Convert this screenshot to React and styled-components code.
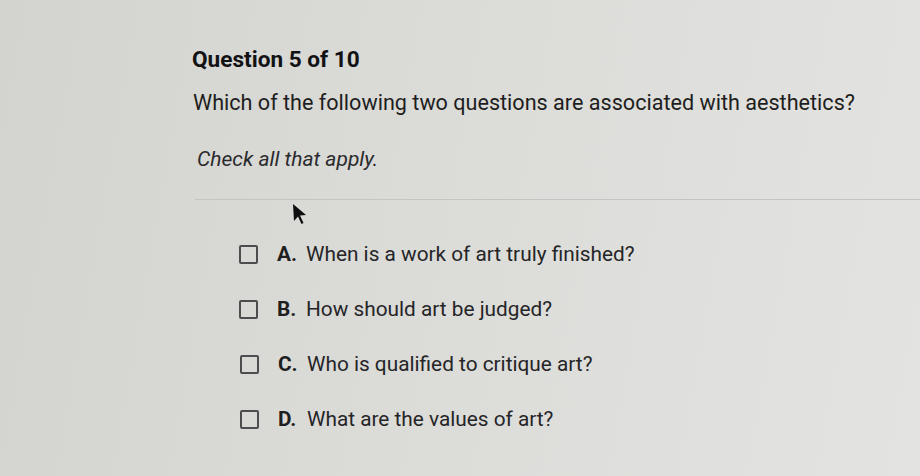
import React from "react";
import styled, { createGlobalStyle } from "styled-components";

const GlobalStyle = createGlobalStyle`
  html, body {
    margin: 0;
    padding: 0;
  }
  body {
    width: 920px;
    height: 476px;
    overflow: hidden;
    background: linear-gradient(100deg, #d3d4d0 0%, #dbdbd8 45%, #e3e3e1 100%);
    font-family: Roboto, "Liberation Sans", sans-serif;
    color: #1c1c1e;
  }
`;

const Page = styled.div`
  position: relative;
  width: 920px;
  height: 476px;
  padding: 46px 0 0 192px;
  box-sizing: border-box;
`;

const Title = styled.h2`
  margin: 0;
  font-size: 22.6px;
  line-height: 27px;
  font-weight: 700;
  color: #121214;
`;

const Prompt = styled.p`
  margin: 17px 0 0 1px;
  font-size: 21.6px;
  line-height: 25px;
  font-weight: 400;
  color: #1e1e20;
`;

const Hint = styled.p`
  margin: 32px 0 0 5px;
  font-size: 21px;
  line-height: 25px;
  font-style: italic;
  color: #2a2a2c;
`;

const Divider = styled.hr`
  margin: 27px 0 0 3px;
  border: none;
  border-top: 1px solid #c4c5c2;
  width: 728px;
`;

const Options = styled.div`
  display: flex;
  flex-direction: column;
  gap: 30px;
  margin: 42px 0 0 47px;
`;

const Option = styled.label`
  display: flex;
  align-items: center;
  font-size: 20.8px;
  line-height: 25px;
  color: #252527;
  padding-left: ${(p) => p.$shift || 0}px;
`;

const Box = styled.span`
  width: 15px;
  height: 15px;
  border: 2px solid #4d4d4f;
  border-radius: 2px;
  margin-right: 19px;
  flex: none;
`;

const Letter = styled.span`
  font-weight: 700;
  width: 29px;
  color: #1f1f21;
`;

const Cursor = styled.svg`
  position: absolute;
  left: 292px;
  top: 203px;
`;

const options = [
  { letter: "A.", text: "When is a work of art truly finished?", shift: 0 },
  { letter: "B.", text: "How should art be judged?", shift: 0 },
  { letter: "C.", text: "Who is qualified to critique art?", shift: 1 },
  { letter: "D.", text: "What are the values of art?", shift: 1 },
];

export default function App() {
  return (
    <>
      <GlobalStyle />
      <Page>
        <Title>Question 5 of 10</Title>
        <Prompt>Which of the following two questions are associated with aesthetics?</Prompt>
        <Hint>Check all that apply.</Hint>
        <Divider />
        <Options>
          {options.map((o) => (
            <Option key={o.letter} $shift={o.shift}>
              <Box />
              <Letter>{o.letter}</Letter>
              <span>{o.text}</span>
            </Option>
          ))}
        </Options>
        <Cursor width="16" height="24" viewBox="0 0 16 24">
          <path d="M1 1 L2 18 L6 13.5 L9.5 21 L11.5 20 L8 12.5 L14 12 Z" fill="#0e0e10" />
        </Cursor>
      </Page>
    </>
  );
}
